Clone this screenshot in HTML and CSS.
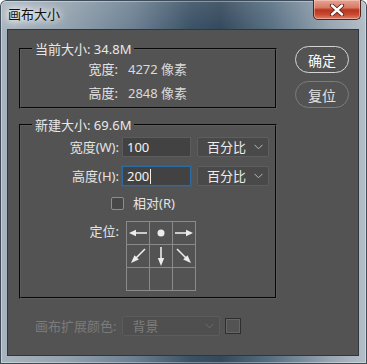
FILE: index.html
```html
<!DOCTYPE html>
<html lang="zh">
<head>
<meta charset="utf-8">
<title>画布大小</title>
<link rel="stylesheet" href="styles.css">
</head>
<body>
<div class="window">
  <div class="titlebar">
    <span class="title">画布大小</span>
    <div class="close">
      <svg width="16" height="12" viewBox="0 0 16 12">
        <path d="M3 1.5 L13 10.5 M13 1.5 L3 10.5" stroke="#5a1f16" stroke-width="4.2" stroke-linecap="round"/>
        <path d="M3 1.5 L13 10.5 M13 1.5 L3 10.5" stroke="#ffffff" stroke-width="2.4" stroke-linecap="round"/>
      </svg>
    </div>
  </div>
  <div class="client">
    <div class="top">
      <div class="groups">
        <fieldset class="group g1">
          <legend>当前大小: 34.8M</legend>
          <div class="info-row"><span class="lbl">宽度:</span><span class="val">4272 像素</span></div>
          <div class="info-row"><span class="lbl">高度:</span><span class="val">2848 像素</span></div>
        </fieldset>
        <fieldset class="group g2">
          <legend>新建大小: 69.6M</legend>
          <div class="field-row">
            <span class="lbl">宽度(W):</span>
            <div class="input">100</div>
            <div class="select"><span>百分比</span><svg class="chev" width="9" height="6" viewBox="0 0 9 6"><polyline points="0.5,0.8 4.5,4.8 8.5,0.8" fill="none" stroke="#b8b8b8" stroke-width="1"/></svg></div>
          </div>
          <div class="field-row second">
            <span class="lbl">高度(H):</span>
            <div class="input focus">200<span class="caret"></span></div>
            <div class="select"><span>百分比</span><svg class="chev" width="9" height="6" viewBox="0 0 9 6"><polyline points="0.5,0.8 4.5,4.8 8.5,0.8" fill="none" stroke="#b8b8b8" stroke-width="1"/></svg></div>
          </div>
          <div class="check-row"><span class="checkbox"></span><span class="check-text">相对(R)</span></div>
          <div class="anchor-row">
            <span class="lbl">定位:</span>
            <div class="anchor">
              <div class="cell"><svg width="22" height="22" viewBox="0 0 22 22"><line x1="8" y1="11" x2="20" y2="11" stroke="#ececec" stroke-width="1.6"/><polygon points="2,11 9,7.8 9,14.2" fill="#ececec"/></svg></div>
              <div class="cell"><svg width="22" height="22" viewBox="0 0 22 22"><circle cx="11" cy="11" r="3.5" fill="#ececec"/></svg></div>
              <div class="cell"><svg width="22" height="22" viewBox="0 0 22 22"><line x1="2" y1="11" x2="14" y2="11" stroke="#ececec" stroke-width="1.6"/><polygon points="20,11 13,7.8 13,14.2" fill="#ececec"/></svg></div>
              <div class="cell"><svg width="22" height="22" viewBox="0 0 22 22"><line x1="18" y1="4" x2="9" y2="13" stroke="#ececec" stroke-width="1.6"/><polygon points="4,18 11.8,14.5 7.5,10.2" fill="#ececec"/></svg></div>
              <div class="cell"><svg width="22" height="22" viewBox="0 0 22 22"><line x1="11" y1="2" x2="11" y2="14" stroke="#ececec" stroke-width="1.6"/><polygon points="11,21 7.8,13 14.2,13" fill="#ececec"/></svg></div>
              <div class="cell"><svg width="22" height="22" viewBox="0 0 22 22"><line x1="4" y1="4" x2="13" y2="13" stroke="#ececec" stroke-width="1.6"/><polygon points="18,18 14.5,10.2 10.2,14.5" fill="#ececec"/></svg></div>
              <div class="cell"></div>
              <div class="cell"></div>
              <div class="cell"></div>
            </div>
          </div>
        </fieldset>
      </div>
      <div class="buttons">
        <div class="btn primary">确定</div>
        <div class="btn">复位</div>
      </div>
    </div>
    <div class="ext-row">
      <span class="ext-lbl">画布扩展颜色:</span>
      <div class="select disabled"><span>背景</span><svg class="chev" width="9" height="6" viewBox="0 0 9 6"><polyline points="0.5,0.8 4.5,4.8 8.5,0.8" fill="none" stroke="#6e6e6e" stroke-width="1"/></svg></div>
      <span class="swatch"></span>
    </div>
  </div>
</div>
</body>
</html>
```
FILE: styles.css
```css
* { box-sizing: border-box; }
html, body { margin: 0; padding: 0; }
body {
  width: 367px;
  height: 364px;
  overflow: hidden;
  font-family: "Noto Sans", "Noto Sans CJK SC", sans-serif;
  font-size: 13px;
}
.window {
  width: 367px;
  height: 364px;
  padding: 0 8px 8px 7px;
  display: flex;
  flex-direction: column;
  border-radius: 6px 6px 0 0;
  background:
    linear-gradient(180deg, rgba(255,255,255,0.10) 0%, rgba(255,255,255,0) 30px),
    linear-gradient(90deg, #a9b5bf 0%, #93a2ae 18%, #6d8193 36%, #3b5266 52%, #34495c 60%, #587083 74%, #98a6b2 90%, #b4bec7 100%);
  box-shadow: inset 0 0 0 1px #3e4c59, inset 0 0 0 2px rgba(255,255,255,0.35);
}
.titlebar {
  height: 29px;
  flex: none;
  display: flex;
  justify-content: space-between;
  align-items: flex-start;
}
.title {
  padding-left: 1px;
  line-height: 29px;
  color: #111;
  font-size: 13px;
  text-shadow: 0 0 6px #fff, 0 0 10px #fff, 0 0 14px rgba(255,255,255,0.8);
}
.close {
  width: 48px;
  height: 20px;
  margin-right: -2px;
  border: 1px solid #4c2620;
  border-top: none;
  border-radius: 0 0 5px 5px;
  background: linear-gradient(180deg, #e7a493 0%, #d77a64 40%, #b8361f 52%, #c8472e 75%, #e0806a 100%);
  box-shadow: inset 0 0 0 1px rgba(255,220,210,0.45);
  display: flex;
  align-items: center;
  justify-content: center;
}
.client {
  flex: 1;
  background: #535353;
  border: 1px solid #2c3742;
  padding: 11px 0 0 11px;
  display: flex;
  flex-direction: column;
  color: #e4e4e4;
}
.top {
  display: flex;
  gap: 18px;
}
.groups {
  width: 258px;
  display: flex;
  flex-direction: column;
  gap: 8px;
}
.group {
  margin: 0;
  padding: 0;
  border: 2px groove #5c5c5c;
  min-width: 0;
}
.group legend {
  margin-left: 11px;
  padding: 0 3px;
  line-height: 16px;
  color: #e8e8e8;
}
.g1 { padding-bottom: 2px; }
.info-row {
  display: flex;
  line-height: 24px;
  height: 24px;
}
.info-row .lbl {
  width: 97px;
  text-align: right;
}
.info-row .val {
  margin-left: 10px;
  color: #dadada;
}
.g2 { padding: 4px 0 6px 0; }
.field-row {
  display: flex;
  align-items: center;
  height: 20px;
}
.field-row.second { margin-top: 9px; }
.field-row .lbl {
  width: 98px;
  text-align: right;
  line-height: 20px;
}
.input {
  margin-left: 3px;
  width: 69px;
  height: 20px;
  background: #424242;
  border: 1px solid #5c5c5c;
  padding-left: 4px;
  line-height: 18px;
  color: #f4f4f4;
  display: flex;
  align-items: center;
}
.input.focus {
  border-color: #2d6ba3;
  box-shadow: 0 0 0 1px rgba(45,107,163,0.35);
}
.caret {
  display: inline-block;
  width: 1px;
  height: 15px;
  background: #f0f0f0;
  margin-left: 1px;
}
.select {
  margin-left: 6px;
  width: 72px;
  height: 20px;
  background: #494949;
  border: 1px solid #5e5e5e;
  border-radius: 2px;
  padding: 0 5px 0 9px;
  display: flex;
  align-items: center;
  justify-content: space-between;
  line-height: 18px;
  color: #ececec;
}
.chev { flex: none; }
.check-row {
  display: flex;
  align-items: center;
  height: 20px;
  margin-top: 7px;
  padding-left: 90px;
}
.checkbox {
  width: 13px;
  height: 13px;
  border: 1px solid #8e8e8e;
  border-radius: 2px;
  background: #474747;
}
.check-text {
  margin-left: 9px;
  line-height: 20px;
}
.anchor-row {
  display: flex;
  align-items: flex-start;
  margin-top: 8px;
}
.anchor-row .lbl {
  width: 98px;
  text-align: right;
  line-height: 20px;
}
.anchor {
  margin-left: 7px;
  display: grid;
  grid-template-columns: repeat(3, 22px);
  grid-template-rows: repeat(3, 22px);
  gap: 1px;
  padding: 1px;
  background: #8a8a8a;
}
.cell {
  background: #535353;
  display: flex;
}
.buttons {
  margin-top: 5px;
  display: flex;
  flex-direction: column;
  gap: 8px;
}
.btn {
  width: 54px;
  height: 27px;
  border-radius: 14px;
  border: 1px solid #7c7c7c;
  display: flex;
  align-items: center;
  justify-content: center;
  font-size: 14px;
  color: #e2e2e2;
}
.btn.primary {
  border: 1.5px solid #d4d4d4;
  color: #fafafa;
}
.ext-row {
  display: flex;
  align-items: center;
  margin-top: 17px;
  padding-left: 16px;
  height: 20px;
}
.ext-lbl {
  color: #7b7b7b;
  line-height: 20px;
}
.select.disabled {
  width: 98px;
  margin-left: 6px;
  background: #4f4f4f;
  border-color: #5c5c5c;
  color: #7d7d7d;
}
.swatch {
  width: 16px;
  height: 16px;
  margin-left: 5px;
  border: 1px solid #2e2e2e;
  box-shadow: inset 0 0 0 1px #666;
  background: #535353;
}
```
